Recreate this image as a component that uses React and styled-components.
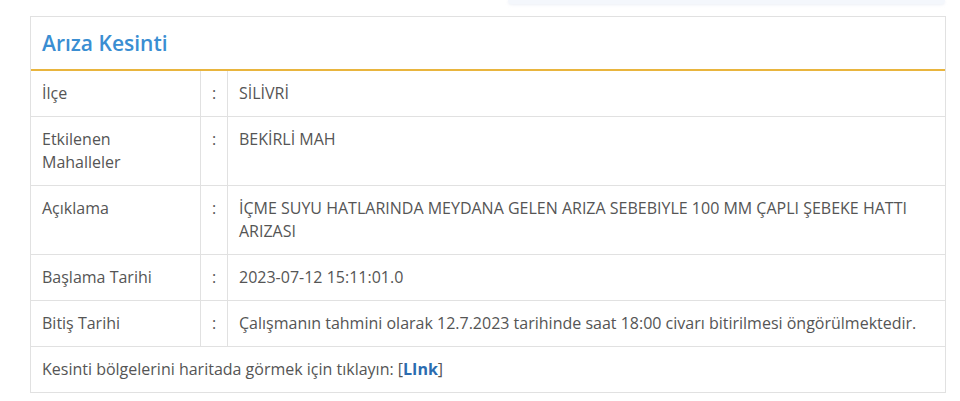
import React from "react";
import styled, { createGlobalStyle } from "styled-components";

const Global = createGlobalStyle`
  html, body { margin: 0; padding: 0; background: #fff; }
  body { font-family: "Open Sans", "Noto Sans", sans-serif; color: #555; }
`;

const Page = styled.div`
  width: 960px;
  height: 401px;
  overflow: hidden;
  display: flex;
  flex-direction: column;
`;

const TopHint = styled.div`
  margin-left: 508px;
  width: 437px;
  height: 4px;
  background: #f4f7fc;
  border-radius: 0 0 6px 6px;
  box-shadow: 0 1px 3px rgba(200, 210, 230, 0.35);
`;

const Panel = styled.section`
  margin: 12px 0 0 30px;
  width: 914px;
  border: 1px solid #e1e1e1;
  background: #fff;
`;

const Header = styled.div`
  height: 52px;
  display: flex;
  align-items: center;
  padding-left: 11px;
  border-bottom: 2px solid #e9b53e;
`;

const Title = styled.h2`
  margin: 0;
  font-size: 21px;
  font-weight: 600;
  color: #3a8ed2;
`;

const Table = styled.div`
  display: grid;
  grid-template-columns: 170px 27px 1fr;
`;

const Cell = styled.div`
  padding: 11px ${(p) => (p.$colon ? "0" : "11px")};
  font-size: 16px;
  line-height: 23px;
  color: #555;
  border-bottom: 1px solid #e1e1e1;
  border-right: ${(p) => (p.$last ? "none" : "1px solid #e1e1e1")};
  text-align: ${(p) => (p.$colon ? "center" : "left")};
`;

const FullRow = styled.div`
  grid-column: 1 / -1;
  padding: 11px;
  font-size: 16px;
  line-height: 23px;
  color: #555;
`;

const LinkText = styled.a`
  color: #2b6cb0;
  font-weight: 700;
  text-decoration: none;
`;

const rows = [
  ["İlçe", "SİLİVRİ"],
  ["Etkilenen Mahalleler", "BEKİRLİ MAH"],
  ["Açıklama", "İÇME SUYU HATLARINDA MEYDANA GELEN ARIZA SEBEBIYLE 100 MM ÇAPLI ŞEBEKE HATTI ARIZASI"],
  ["Başlama Tarihi", "2023-07-12 15:11:01.0"],
  ["Bitiş Tarihi", "Çalışmanın tahmini olarak 12.7.2023 tarihinde saat 18:00 civarı bitirilmesi öngörülmektedir."],
];

export default function App() {
  return (
    <Page>
      <Global />
      <TopHint />
      <Panel>
        <Header>
          <Title>Arıza Kesinti</Title>
        </Header>
        <Table>
          {rows.map(([k, v]) => (
            <React.Fragment key={k}>
              <Cell>{k}</Cell>
              <Cell $colon>:</Cell>
              <Cell $last>{v}</Cell>
            </React.Fragment>
          ))}
          <FullRow>
            Kesinti bölgelerini haritada görmek için tıklayın: [<LinkText href="#">LInk</LinkText>]
          </FullRow>
        </Table>
      </Panel>
    </Page>
  );
}
